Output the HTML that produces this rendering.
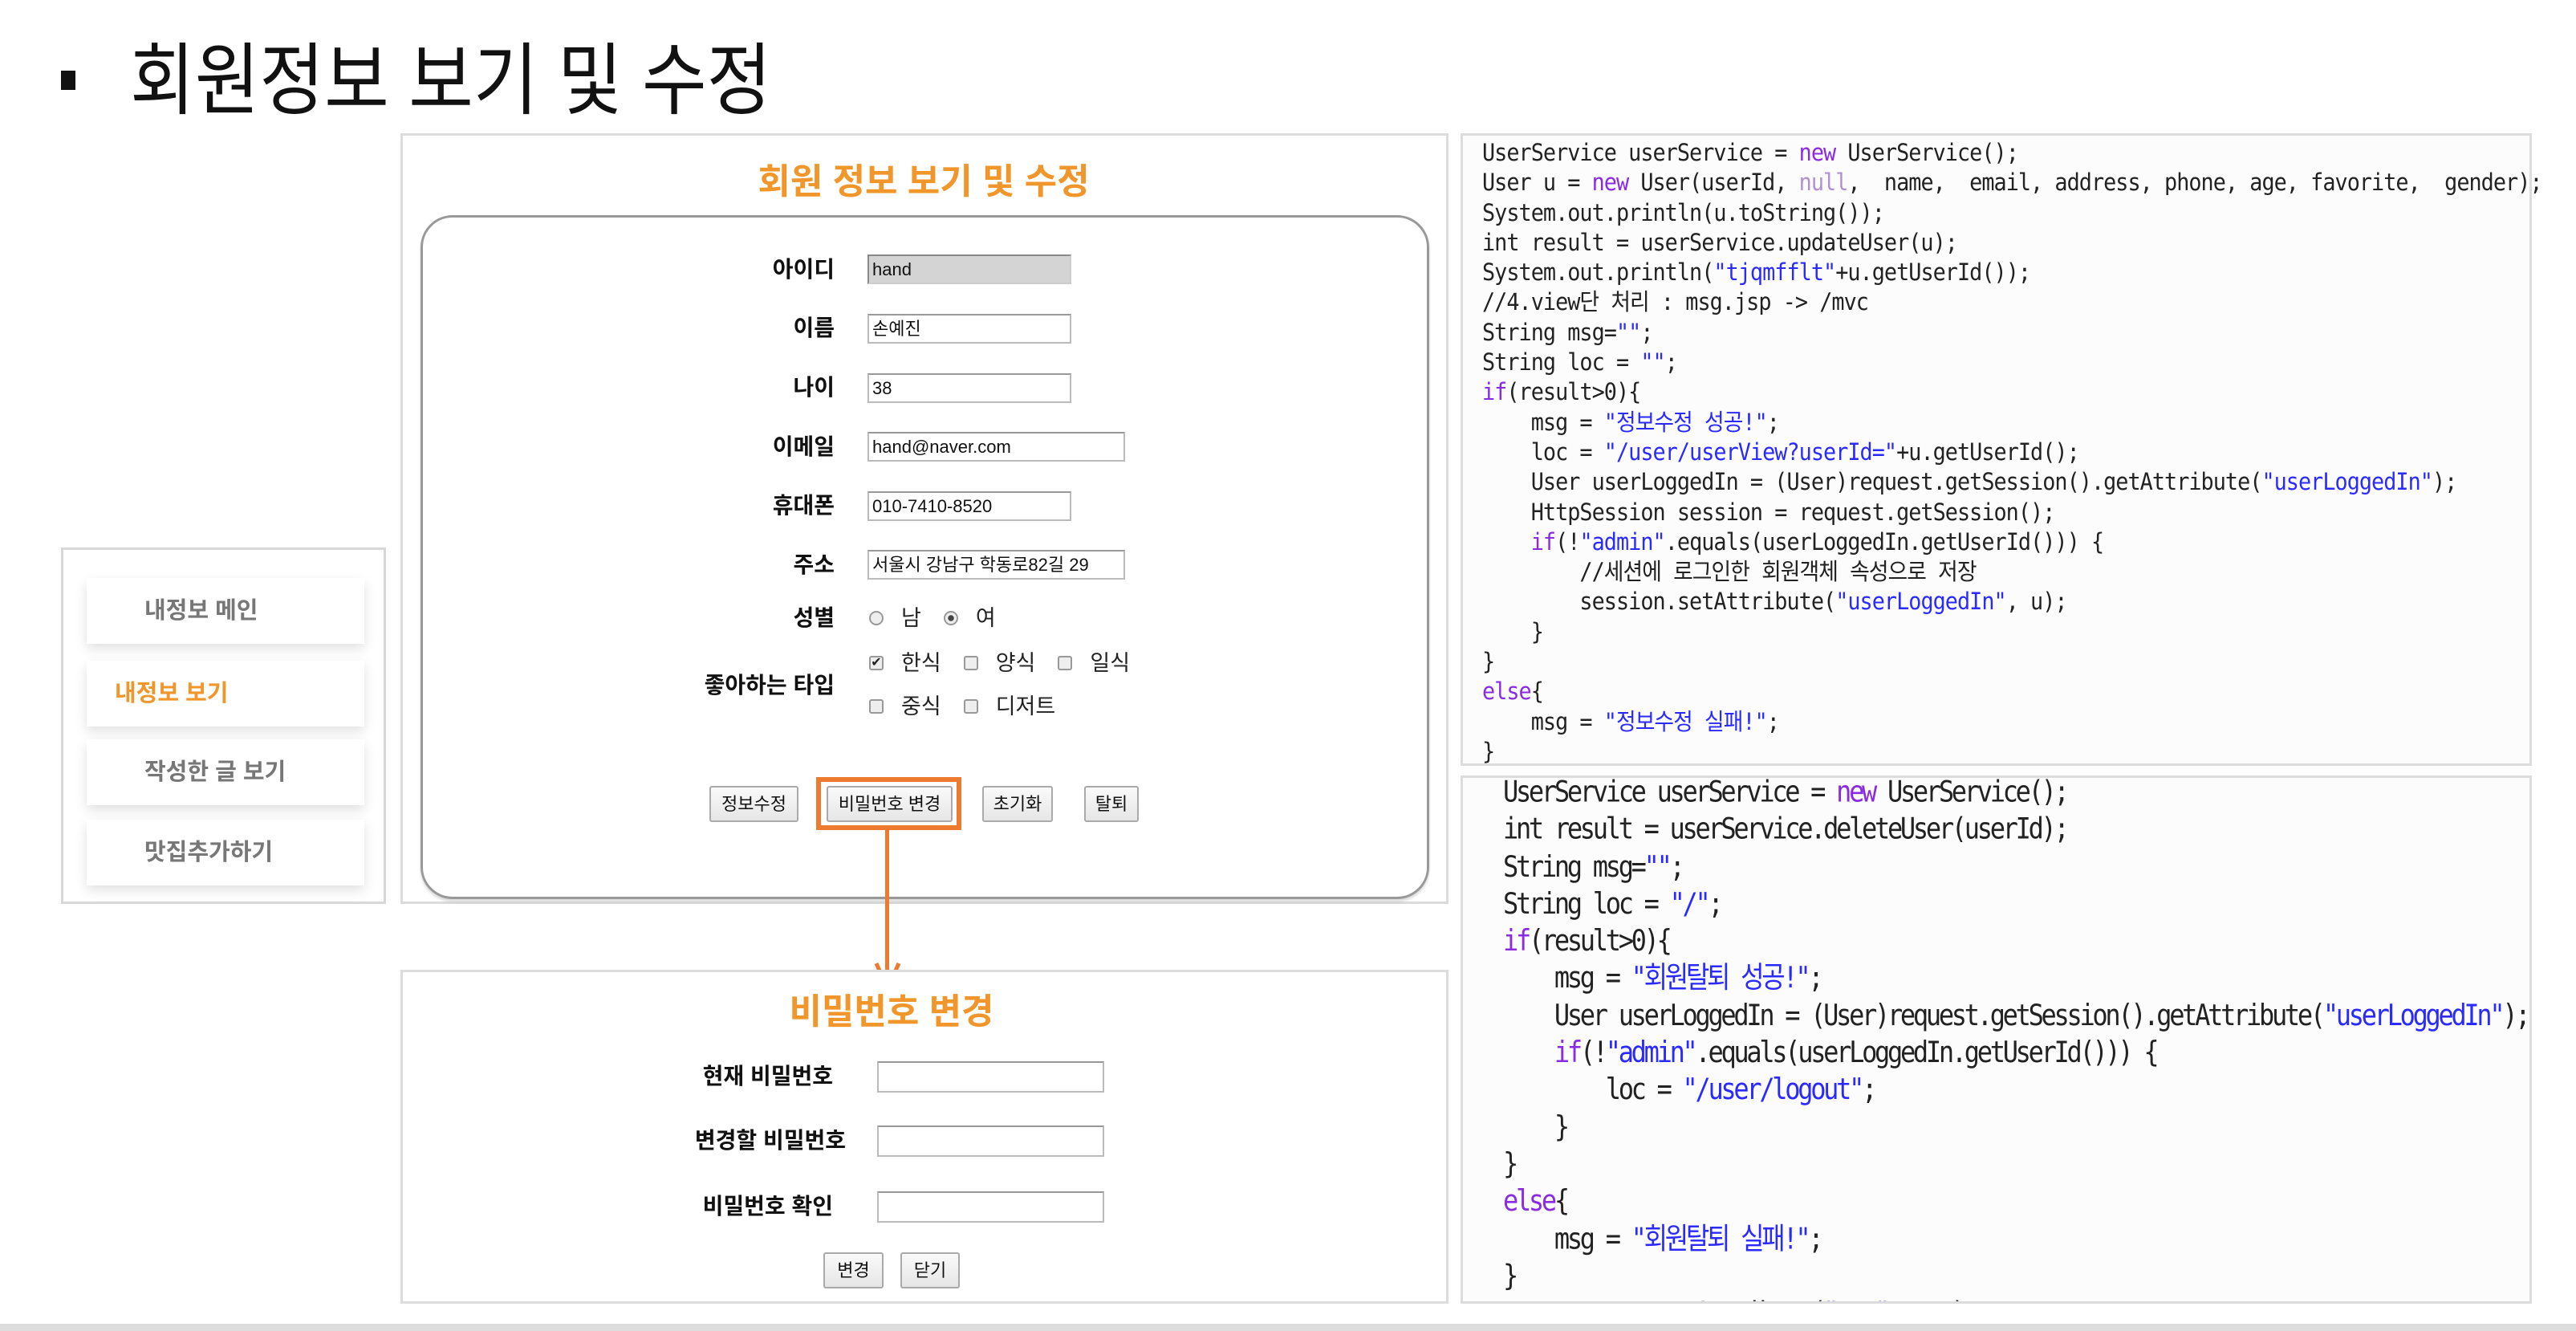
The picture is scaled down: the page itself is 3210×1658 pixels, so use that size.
<!DOCTYPE html>
<html><head><meta charset="utf-8"><style>
*{margin:0;padding:0;box-sizing:border-box}
body{width:3210px;height:1658px;background:#fff;position:relative;overflow:hidden;font-family:"Liberation Sans","Noto Sans CJK KR",sans-serif}
.a{position:absolute}
.bul{left:76px;top:88px;width:18px;height:24px;background:#111}
.title{left:162px;top:40px;font-size:98px;line-height:120px;color:#111;transform:scaleX(.895);transform-origin:left top;white-space:nowrap}
.side{left:76px;top:682px;width:405px;height:444px;border:3px solid #d8d8d8}
.mi{left:108px;width:346px;height:82px;background:#fff;box-shadow:0 6px 14px rgba(0,0,0,.12);font-size:29px;font-weight:bold;color:#777;line-height:82px}
.panel{border:3px solid #dcdcdc;background:#fff}
.h{color:#f0962a;font-weight:bold;font-size:44px;text-align:center;white-space:nowrap}
.inner{left:524px;top:268px;width:1257px;height:852px;border:3px solid #999;border-radius:40px;box-shadow:0 3px 3px rgba(0,0,0,.15)}
.lb{font-size:28px;font-weight:bold;color:#111;text-align:right;white-space:nowrap;line-height:36px}
.in{height:37px;border:2px solid #bbb;border-top-color:#999;background:#fff;font-size:22px;line-height:33px;padding-left:4px;color:#111;white-space:nowrap}
.btn{height:45px;border:2px solid #aaa;background:linear-gradient(#fafafa,#e6e6e6);font-size:22px;line-height:41px;text-align:center;color:#111;border-radius:3px}
.opt{font-size:27px;color:#222;line-height:36px;white-space:nowrap}
.cb{display:inline-block;width:18px;height:18px;border:2px solid #999;background:#eee;border-radius:3px;vertical-align:middle;margin:0 22px 4px 2px;font-size:16px;line-height:14px;text-align:center}
.rb{border-radius:50%}
.t{margin-right:26px}
.code{font-family:"DejaVu Sans Mono","Liberation Mono","Noto Sans CJK KR",monospace;white-space:pre;color:#222}
.k{color:#8a2be2}.s{color:#2a2aff}.n{color:#b090d0}
</style></head><body>
<div class="a bul"></div>
<div class="a title">회원정보 보기 및 수정</div>

<div class="a side"></div>
<div class="a mi" style="top:720px;padding-left:72px">내정보 메인</div>
<div class="a mi" style="top:823px;padding-left:35px;color:#f0962a">내정보 보기</div>
<div class="a mi" style="top:921px;padding-left:72px">작성한 글 보기</div>
<div class="a mi" style="top:1021px;padding-left:72px">맛집추가하기</div>

<div class="a panel" style="left:499px;top:166px;width:1306px;height:960px"></div>
<div class="a h" style="left:851px;top:190px;width:600px">회원 정보 보기 및 수정</div>
<div class="a inner"></div>

<div class="a lb" style="left:800px;width:240px;top:318px">아이디</div>
<div class="a in" style="left:1081px;top:317px;width:254px;background:#d4d4d4;border-color:#888 #ccc #ccc #888">hand</div>
<div class="a lb" style="left:800px;width:240px;top:391px">이름</div>
<div class="a in" style="left:1081px;top:391px;width:254px">손예진</div>
<div class="a lb" style="left:800px;width:240px;top:465px">나이</div>
<div class="a in" style="left:1081px;top:465px;width:254px">38</div>
<div class="a lb" style="left:800px;width:240px;top:539px">이메일</div>
<div class="a in" style="left:1081px;top:538px;width:321px">hand@naver.com</div>
<div class="a lb" style="left:800px;width:240px;top:612px">휴대폰</div>
<div class="a in" style="left:1081px;top:612px;width:254px">010-7410-8520</div>
<div class="a lb" style="left:800px;width:240px;top:686px">주소</div>
<div class="a in" style="left:1081px;top:685px;width:321px">서울시 강남구 학동로82길 29</div>
<div class="a lb" style="left:800px;width:240px;top:752px">성별</div>
<div class="a opt" style="left:1081px;top:752px"><span class="cb rb"></span><span class="t">남</span><span class="cb rb" style="background:radial-gradient(#444 35%,#eee 40%)"></span><span>여</span></div>
<div class="a lb" style="left:800px;width:240px;top:836px">좋아하는 타입</div>
<div class="a opt" style="left:1081px;top:808px"><span class="cb">✔</span><span class="t">한식</span><span class="cb"></span><span class="t">양식</span><span class="cb"></span><span>일식</span></div>
<div class="a opt" style="left:1081px;top:862px"><span class="cb"></span><span class="t">중식</span><span class="cb"></span><span>디저트</span></div>

<div class="a btn" style="left:884px;top:979px;width:111px">정보수정</div>
<div class="a" style="left:1017px;top:968px;width:181px;height:66px;border:6px solid #ee7a30"></div>
<div class="a btn" style="left:1030px;top:979px;width:157px">비밀번호 변경</div>
<div class="a btn" style="left:1224px;top:979px;width:88px">초기화</div>
<div class="a btn" style="left:1351px;top:979px;width:68px">탈퇴</div>
<div class="a" style="left:1103px;top:1034px;width:5px;height:192px;background:#ee7a30"></div>
<svg class="a" style="left:1088px;top:1196px" width="36" height="40"><path d="M4 4 L18 36 L32 4" fill="none" stroke="#ee7a30" stroke-width="5"/></svg>

<div class="a panel" style="left:499px;top:1208px;width:1306px;height:416px"></div>
<div class="a h" style="left:811px;top:1224px;width:600px">비밀번호 변경</div>
<div class="a lb" style="left:740px;width:298px;top:1323px">현재 비밀번호</div>
<div class="a in" style="left:1093px;top:1322px;width:283px;height:39px"></div>
<div class="a lb" style="left:740px;width:314px;top:1403px">변경할 비밀번호</div>
<div class="a in" style="left:1093px;top:1402px;width:283px;height:39px"></div>
<div class="a lb" style="left:740px;width:298px;top:1485px">비밀번호 확인</div>
<div class="a in" style="left:1093px;top:1484px;width:283px;height:39px"></div>
<div class="a btn" style="left:1026px;top:1560px;width:75px">변경</div>
<div class="a btn" style="left:1122px;top:1560px;width:74px">닫기</div>

<div class="a panel" style="left:1820px;top:166px;width:1335px;height:788px;background:#fcfcfc"></div>
<div class="a code" style="left:1847px;top:172px;font-size:29px;line-height:37.3px;letter-spacing:-1.05px;transform:scaleX(.925);transform-origin:left top">UserService userService = <span class="k">new</span> UserService();
User u = <span class="k">new</span> User(userId, <span class="n">null</span>,  name,  email, address, phone, age, favorite,  gender);
System.out.println(u.toString());
int result = userService.updateUser(u);
System.out.println(<span class="s">"tjqmfflt"</span>+u.getUserId());
//4.view단 처리 : msg.jsp -> /mvc
String msg=<span class="s">""</span>;
String loc = <span class="s">""</span>;
<span class="k">if</span>(result>0){
    msg = <span class="s">"정보수정 성공!"</span>;
    loc = <span class="s">"/user/userView?userId="</span>+u.getUserId();
    User userLoggedIn = (User)request.getSession().getAttribute(<span class="s">"userLoggedIn"</span>);
    HttpSession session = request.getSession();
    <span class="k">if</span>(!<span class="s">"admin"</span>.equals(userLoggedIn.getUserId())) {
        //세션에 로그인한 회원객체 속성으로 저장
        session.setAttribute(<span class="s">"userLoggedIn"</span>, u);
    }
}
<span class="k">else</span>{
    msg = <span class="s">"정보수정 실패!"</span>;
}</div>

<div class="a panel" style="left:1820px;top:966px;width:1335px;height:658px;background:#fcfcfc;overflow:hidden">
<div class="a code" style="left:50px;top:-6px;font-size:32px;line-height:40.3px;letter-spacing:-3.3px;transform:scaleY(1.15);transform-origin:left top">UserService userService = <span class="k">new</span> UserService();
int result = userService.deleteUser(userId);
String msg=<span class="s">""</span>;
String loc = <span class="s">"/"</span>;
<span class="k">if</span>(result>0){
    msg = <span class="s">"회원탈퇴 성공!"</span>;
    User userLoggedIn = (User)request.getSession().getAttribute(<span class="s">"userLoggedIn"</span>);
    <span class="k">if</span>(!<span class="s">"admin"</span>.equals(userLoggedIn.getUserId())) {
        loc = <span class="s">"/user/logout"</span>;
    }
}
<span class="k">else</span>{
    msg = <span class="s">"회원탈퇴 실패!"</span>;
}
    request.setAttribute(<span class="s">"msg"</span>, msg);</div>
</div>

<div class="a" style="left:0;top:1649px;width:3210px;height:9px;background:#ddd"></div>
</body></html>
